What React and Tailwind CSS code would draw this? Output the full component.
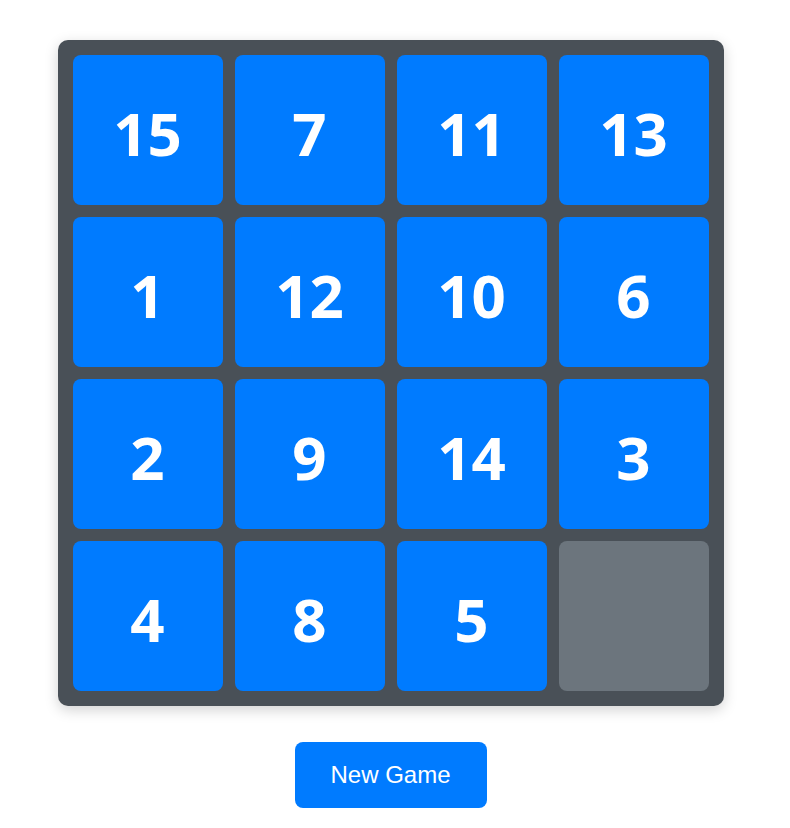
import React, { useState } from 'react';

const START = [15, 7, 11, 13, 1, 12, 10, 6, 2, 9, 14, 3, 4, 8, 5, 0];

const shuffle = () => {
  const a = [...START];
  for (let i = a.length - 1; i > 0; i--) {
    const j = Math.floor(Math.random() * (i + 1));
    [a[i], a[j]] = [a[j], a[i]];
  }
  return a;
};

export default function App() {
  const [tiles, setTiles] = useState(START);

  const move = (idx) => {
    const empty = tiles.indexOf(0);
    const r1 = Math.floor(idx / 4), c1 = idx % 4;
    const r2 = Math.floor(empty / 4), c2 = empty % 4;
    if (Math.abs(r1 - r2) + Math.abs(c1 - c2) !== 1) return;
    const next = [...tiles];
    [next[idx], next[empty]] = [next[empty], next[idx]];
    setTiles(next);
  };

  return (
    <div className="min-h-screen bg-white flex flex-col items-center pt-[40px] pr-[9px]">
      {/* доска */}
      <div className="grid grid-cols-[repeat(4,150px)] grid-rows-[repeat(4,150px)] gap-[12px] p-[15px] bg-[#495057] rounded-[10px] shadow-[0_4px_14px_rgba(0,0,0,0.18)]">
        {tiles.map((n, i) =>
          n === 0 ? (
            <div key={i} className="rounded-[8px] bg-[#6c757d]" />
          ) : (
            <button
              key={i}
              onClick={() => move(i)}
              className="rounded-[8px] bg-[#007bff] text-white flex items-center justify-center pt-[6px] text-[60px] font-bold font-['Noto_Sans',sans-serif] leading-none cursor-pointer"
            >
              {n}
            </button>
          )
        )}
      </div>

      <button
        onClick={() => setTiles(shuffle())}
        className="mt-[36px] w-[192px] h-[66px] rounded-[8px] bg-[#007bff] text-white text-[24px] font-['Liberation_Sans',Arial,sans-serif] cursor-pointer"
      >
        New Game
      </button>
    </div>
  );
}
